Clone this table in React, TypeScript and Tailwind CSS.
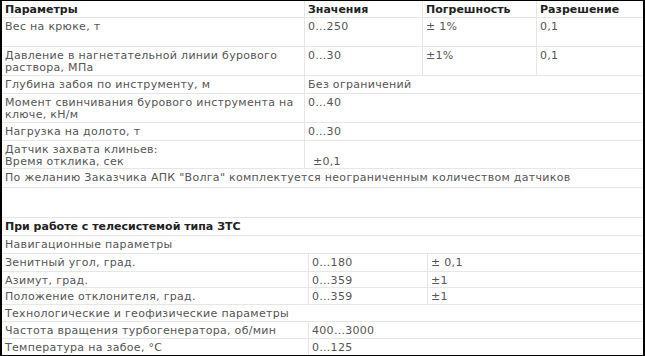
const line = "border-b border-[#e6e6e6]";

type Cell = { text: React.ReactNode; w?: string; bold?: boolean };

const Row = ({ cells, h, last }: { cells: Cell[]; h: string; last?: boolean }) => (
  <div className={`flex ${h} ${last ? "" : line}`}>
    {cells.map((c, i) => (
      <div
        key={i}
        className={`${c.w ?? "flex-1"} ${i < cells.length - 1 ? "border-r border-[#e6e6e6]" : ""} pl-[3px] pr-1 pt-[3px] leading-[12px] ${
          c.bold ? "font-bold tracking-normal text-[#222]" : "tracking-[0.3px] text-[#555]"
        }`}
      >
        {c.text}
      </div>
    ))}
  </div>
);

export default function App() {
  const c1 = "w-[303px] shrink-0";
  const c2 = "w-[118px] shrink-0";
  const c3 = "w-[114px] shrink-0";
  const l1 = "w-[307px] shrink-0";
  const l2 = "w-[119px] shrink-0";

  return (
    <div className="h-[356px] w-[645px] overflow-hidden border-x-2 border-y border-black bg-white font-['DejaVu_Sans',Verdana,sans-serif] text-[11px]">
      <Row
        h="h-[17px]"
        cells={[
          { text: "Параметры", w: c1, bold: true },
          { text: "Значения", w: c2, bold: true },
          { text: "Погрешность", w: c3, bold: true },
          { text: "Разрешение", bold: true },
        ]}
      />
      <Row
        h="h-[29px]"
        cells={[
          { text: "Вес на крюке, т", w: c1 },
          { text: "0…250", w: c2 },
          { text: "± 1%", w: c3 },
          { text: "0,1" },
        ]}
      />
      <Row
        h="h-[29px]"
        cells={[
          { text: "Давление в нагнетательной линии бурового раствора, МПа", w: c1 },
          { text: "0…30", w: c2 },
          { text: "±1%", w: c3 },
          { text: "0,1" },
        ]}
      />
      <Row
        h="h-[18px]"
        cells={[
          { text: "Глубина забоя по инструменту, м", w: c1 },
          { text: "Без ограничений" },
        ]}
      />
      <Row
        h="h-[29px]"
        cells={[
          { text: "Момент свинчивания бурового инструмента на ключе, кН/м", w: c1 },
          { text: "0…40" },
        ]}
      />
      <Row
        h="h-[18px]"
        cells={[
          { text: "Нагрузка на долото, т", w: c1 },
          { text: "0…30" },
        ]}
      />
      <Row
        h="h-[28px]"
        cells={[
          {
            text: (
              <>
                Датчик захвата клиньев:
                <br />
                Время отклика, сек
              </>
            ),
            w: c1,
          },
          {
            text: (
              <>
                <br />
                <span className="pl-[5px]">±0,1</span>
              </>
            ),
          },
        ]}
      />
      <Row
        h="h-[19px]"
        cells={[
          { text: 'По желанию Заказчика АПК "Волга" комплектуется неограниченным количеством датчиков' },
        ]}
      />
      <Row h="h-[30px]" cells={[{ text: "" }]} />
      <Row h="h-[18px]" cells={[{ text: "При работе с телесистемой типа ЗТС", bold: true }]} />
      <Row h="h-[18px]" cells={[{ text: "Навигационные параметры" }]} />
      <Row
        h="h-[18px]"
        cells={[
          { text: "Зенитный угол, град.", w: l1 },
          { text: "0…180", w: l2 },
          { text: "± 0,1" },
        ]}
      />
      <Row
        h="h-[16px]"
        cells={[
          { text: "Азимут, град.", w: l1 },
          { text: "0…359", w: l2 },
          { text: "±1" },
        ]}
      />
      <Row
        h="h-[17px]"
        cells={[
          { text: "Положение отклонителя, град.", w: l1 },
          { text: "0…359", w: l2 },
          { text: "±1" },
        ]}
      />
      <Row h="h-[17px]" cells={[{ text: "Технологические и геофизические параметры" }]} />
      <Row
        h="h-[17px]"
        cells={[
          { text: "Частота вращения турбогенератора, об/мин", w: l1 },
          { text: "400…3000" },
        ]}
      />
      <Row
        h="h-[16px]"
        last
        cells={[
          { text: "Температура на забое, °С", w: l1 },
          { text: "0…125" },
        ]}
      />
    </div>
  );
}
